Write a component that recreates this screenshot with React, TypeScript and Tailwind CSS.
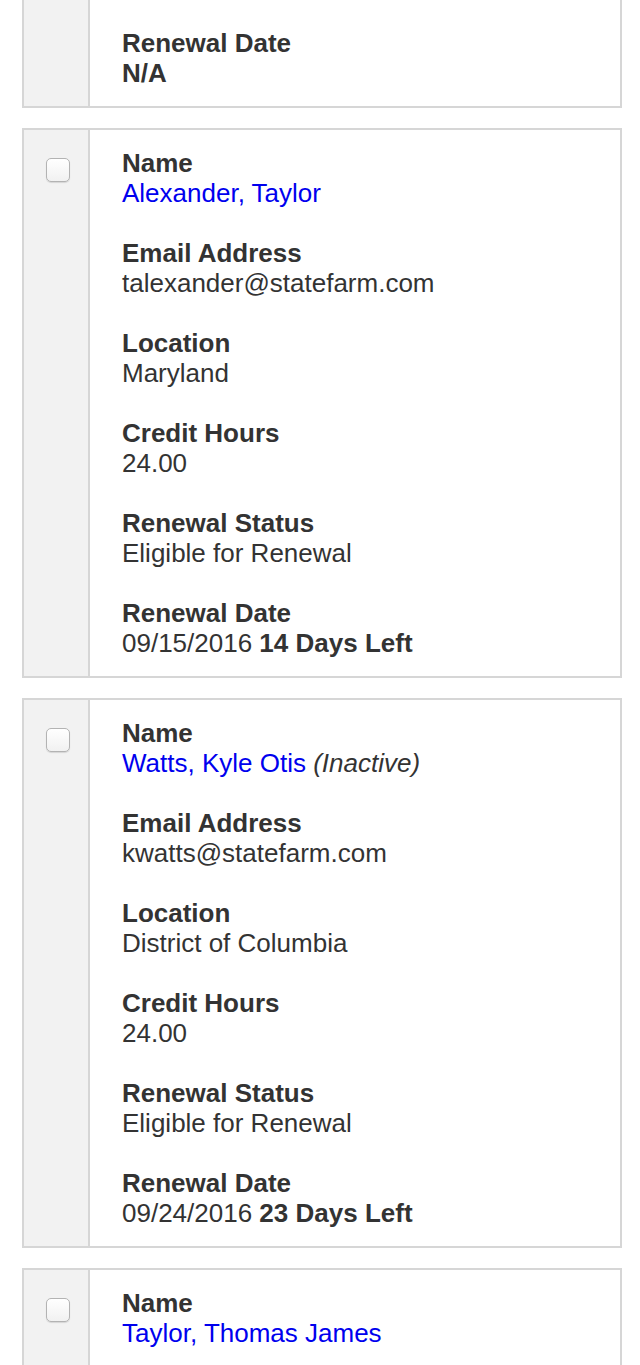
import React from "react";

type Field = { label: string; value: React.ReactNode };

type Person = {
  name: string;
  inactive?: boolean;
  email?: string;
  location?: string;
  hours?: string;
  status?: string;
  date?: React.ReactNode;
};

const people: Person[] = [
  {
    name: "Alexander, Taylor",
    email: "talexander@statefarm.com",
    location: "Maryland",
    hours: "24.00",
    status: "Eligible for Renewal",
    date: (
      <>
        09/15/2016 <span className="font-bold">14 Days Left</span>
      </>
    ),
  },
  {
    name: "Watts, Kyle Otis",
    inactive: true,
    email: "kwatts@statefarm.com",
    location: "District of Columbia",
    hours: "24.00",
    status: "Eligible for Renewal",
    date: (
      <>
        09/24/2016 <span className="font-bold">23 Days Left</span>
      </>
    ),
  },
  // last card runs off the bottom of the screen, only its name shows
  {
    name: "Taylor, Thomas James",
  },
];

function Checkbox() {
  return (
    <span className="block w-[24px] h-[24px] rounded-[5px] border border-[#b3b3b3] bg-gradient-to-b from-white to-[#f1f1f1] shadow-[0_1px_1px_rgba(0,0,0,0.12)]" />
  );
}

function FieldList({ fields }: { fields: Field[] }) {
  return (
    <>
      {fields.map((f, key) => (
        <div key={key}>
          <div className="font-bold">{f.label}</div>
          <div>{f.value}</div>
        </div>
      ))}
    </>
  );
}

function PersonCard({ person }: { person: Person }) {
  const fields: Field[] = [
    {
      label: "Name",
      value: (
        <>
          <a href="#" className="text-[#0000ee]">
            {person.name}
          </a>
          {person.inactive && <span className="italic"> (Inactive)</span>}
        </>
      ),
    },
  ];
  if (person.email) fields.push({ label: "Email Address", value: person.email });
  if (person.location) fields.push({ label: "Location", value: person.location });
  if (person.hours) fields.push({ label: "Credit Hours", value: person.hours });
  if (person.status) fields.push({ label: "Renewal Status", value: person.status });
  if (person.date) fields.push({ label: "Renewal Date", value: person.date });

  const partial = fields.length === 1;

  return (
    <div className="flex border-2 border-[#d6d6d6] bg-white mt-[20px]">
      <div className="w-[66px] shrink-0 bg-[#f2f2f2] border-r-2 border-[#d6d6d6] flex justify-center pt-[28px] pl-[3px]">
        <div>
          <Checkbox />
        </div>
      </div>
      <div
        className={
          "flex-1 pl-[32px] pt-[18px] flex flex-col gap-[30px] " +
          (partial ? "pb-[60px]" : "pb-[18px]")
        }
      >
        <FieldList fields={fields} />
      </div>
    </div>
  );
}

export default function App() {
  return (
    <div className="w-[640px] h-[1365px] overflow-hidden bg-white font-['Liberation_Sans',Arial,sans-serif] text-[26px] leading-[30px] text-[#333]">
      <div className="pl-[22px] pr-[18px]">
        {/* previous card, scrolled so only its last field shows */}
        <div className="flex border-2 border-t-0 border-[#d6d6d6] bg-white">
          <div className="w-[66px] shrink-0 bg-[#f2f2f2] border-r-2 border-[#d6d6d6]" />
          <div className="flex-1 pl-[32px] pt-[28px] pb-[18px]">
            <FieldList
              fields={[
                {
                  label: "Renewal Date",
                  value: <span className="font-bold">N/A</span>,
                },
              ]}
            />
          </div>
        </div>
        {people.map((p, key) => (
          <PersonCard key={key} person={p} />
        ))}
      </div>
    </div>
  );
}
